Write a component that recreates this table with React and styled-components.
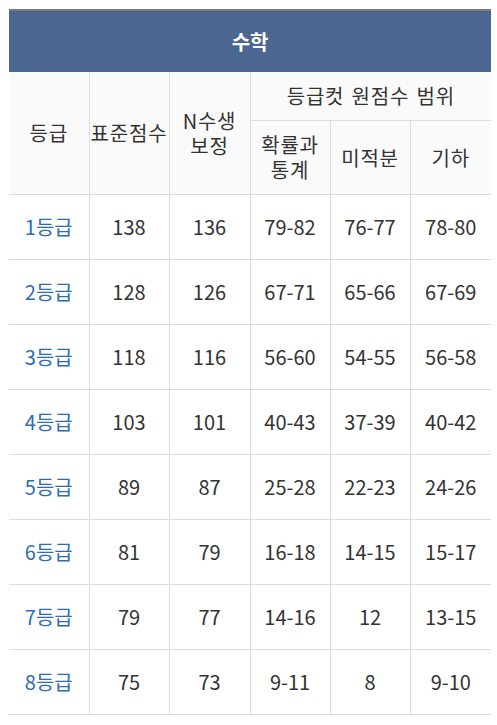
import React from "react";
import styled, { createGlobalStyle } from "styled-components";

const Global = createGlobalStyle`
  html, body { margin: 0; padding: 0; background: #fff; }
  body { font-family: "Noto Sans CJK KR", "Noto Sans", sans-serif; color: #333; }
`;

const Wrap = styled.div`
  padding: 9px 6px 0 9px;
`;

const Table = styled.table`
  width: 482px;
  border-collapse: collapse;
  table-layout: fixed;
  text-align: center;
  font-size: 20px;
  color: #333;
`;

const Row = styled.tr`
  height: ${(p) => p.$h}px;
`;

const TitleCell = styled.th`
  padding: 0;
  background: #4b6690;
  border-top: 2px solid #7a7a7a;
  color: #fff;
  font-size: 20px;
  font-weight: 700;
`;

const HeadCell = styled.th`
  padding: 0;
  background: #fafafa;
  font-weight: 400;
  line-height: 25px;
  letter-spacing: 0.8px;
  word-spacing: 2px;
  white-space: nowrap;
  border-bottom: 1px solid #dcdcdc;
  border-left: 1px solid #dcdcdc;
  &:first-child { border-left: ${(p) => (p.$inner ? "1px solid #dcdcdc" : "none")}; }
`;

const Cell = styled.td`
  padding: 0;
  border-bottom: 1px solid #dcdcdc;
  border-left: 1px solid #dcdcdc;
  &:first-child { border-left: none; }
`;

const Grade = styled(Cell)`
  color: #2e6db4;
`;

const rows = [
  ["1등급", "138", "136", "79-82", "76-77", "78-80"],
  ["2등급", "128", "126", "67-71", "65-66", "67-69"],
  ["3등급", "118", "116", "56-60", "54-55", "56-58"],
  ["4등급", "103", "101", "40-43", "37-39", "40-42"],
  ["5등급", "89", "87", "25-28", "22-23", "24-26"],
  ["6등급", "81", "79", "16-18", "14-15", "15-17"],
  ["7등급", "79", "77", "14-16", "12", "13-15"],
  ["8등급", "75", "73", "9-11", "8", "9-10"],
];

export default function App() {
  return (
    <>
      <Global />
      <Wrap>
        <Table>
          <colgroup>
            <col style={{ width: 80 }} />
            <col style={{ width: 80 }} />
            <col style={{ width: 81 }} />
            <col style={{ width: 80 }} />
            <col style={{ width: 80 }} />
            <col style={{ width: 81 }} />
          </colgroup>
          <thead>
            <Row $h={62}>
              <TitleCell colSpan={6}>수학</TitleCell>
            </Row>
            <Row $h={48}>
              <HeadCell rowSpan={2}>등급</HeadCell>
              <HeadCell rowSpan={2}>표준점수</HeadCell>
              <HeadCell rowSpan={2}>N수생<br />보정</HeadCell>
              <HeadCell colSpan={3}>등급컷 원점수 범위</HeadCell>
            </Row>
            <Row $h={74}>
              <HeadCell $inner>확률과<br />통계</HeadCell>
              <HeadCell>미적분</HeadCell>
              <HeadCell>기하</HeadCell>
            </Row>
          </thead>
          <tbody>
            {rows.map((r) => (
              <Row $h={65} key={r[0]}>
                <Grade>{r[0]}</Grade>
                {r.slice(1).map((v, i) => (
                  <Cell key={i}>{v}</Cell>
                ))}
              </Row>
            ))}
          </tbody>
        </Table>
      </Wrap>
    </>
  );
}
